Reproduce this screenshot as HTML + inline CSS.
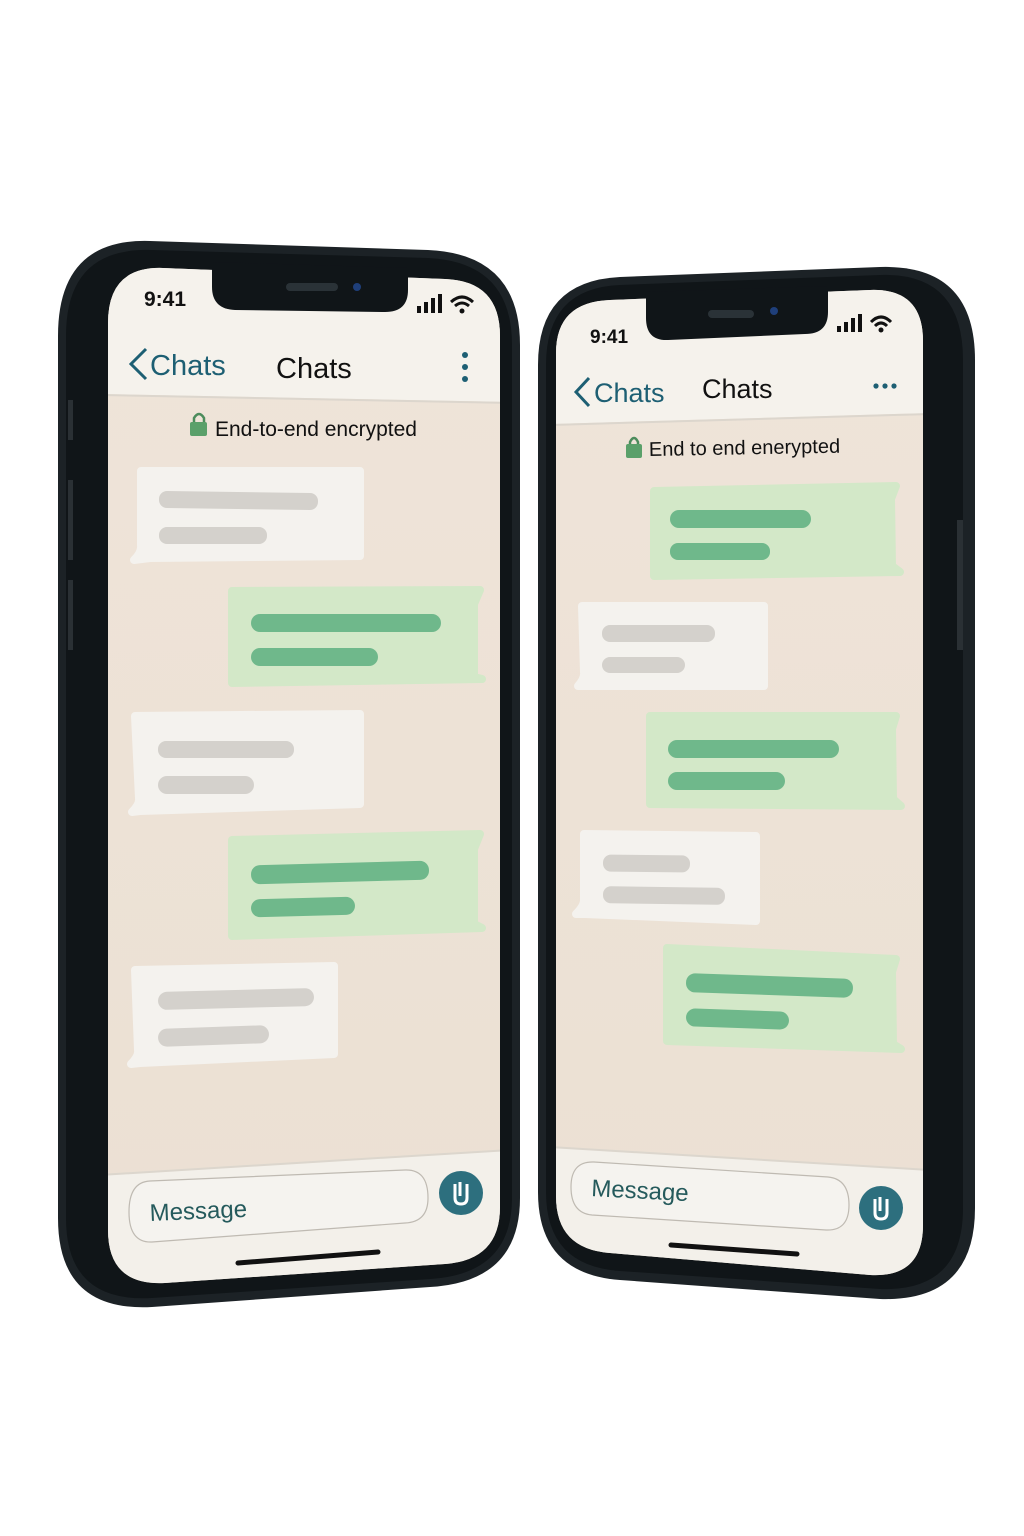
<!DOCTYPE html>
<html><head><meta charset="utf-8"><style>
html,body{margin:0;padding:0;background:#fff;width:1024px;height:1536px;overflow:hidden}
svg{display:block}
text{font-family:"Liberation Sans",sans-serif}
</style></head><body>
<svg width="1024" height="1536" viewBox="0 0 1024 1536" xmlns="http://www.w3.org/2000/svg">
<defs>
<linearGradient id="chatL" x1="0" y1="0" x2="0" y2="1"><stop offset="0" stop-color="#efe4d9"/><stop offset="1" stop-color="#ebe0d3"/></linearGradient>
<clipPath id="scrL"><path d="M163,268 L445,279 Q500,281 500,336 L500,1207 Q500,1260 445,1264 L165,1283 Q108,1286 108,1230 L108,323 Q108,266 163,268 Z"/></clipPath>
<clipPath id="scrR"><path d="M610,300 L870,290 Q923,288 923,341 L923,1225 Q923,1278 870,1275 L610,1253 Q556,1249 556,1196 L556,353 Q556,302 610,300 Z"/></clipPath>
</defs>

<!-- LEFT PHONE -->
<path d="M150,241 L428,250 Q520,254 520,345 L520,1198 Q520,1282 430,1287 L152,1307 Q58,1312 58,1218 L58,336 Q58,238 150,241 Z" fill="#1c2226"/>
<path d="M152,250 L428,258 Q512,262 512,345 L512,1198 Q512,1274 430,1279 L152,1298 Q66,1303 66,1218 L66,336 Q66,247 152,250 Z" fill="#101518"/>
<rect x="68" y="400" width="5" height="40" fill="#2a3034"/><rect x="68" y="480" width="5" height="80" fill="#2a3034"/><rect x="68" y="580" width="5" height="70" fill="#2a3034"/>
<g clip-path="url(#scrL)">
<rect x="100" y="260" width="410" height="1030" fill="url(#chatL)"/>
<polygon points="100,260 510,260 510,402 100,394" fill="#f5f2ec"/>
<polygon points="100,394 510,402 510,404 100,396" fill="#dcd6cd"/>
<polygon points="100,1175 510,1150 510,1290 100,1290" fill="#f3f0ea"/>
<polygon points="100,1174 510,1149 510,1151 100,1176" fill="#dcd6cd"/>
<text x="144" y="306" font-size="21" font-weight="bold" fill="#111">9:41</text>
<rect x="417" y="306" width="4" height="7" fill="#111"/><rect x="424" y="302" width="4" height="11" fill="#111"/><rect x="431" y="298" width="4" height="15" fill="#111"/><rect x="438" y="294" width="4" height="19" fill="#111"/>
<path d="M451,302 Q462,292 473,302 M455,306 Q462,300 469,306" stroke="#111" stroke-width="3" fill="none"/><circle cx="462" cy="311" r="2.5" fill="#111"/>
<path d="M146,349 L131,364 L146,379" stroke="#1d5f73" stroke-width="3" fill="none"/>
<text x="150" y="375" font-size="29" fill="#1d5f73">Chats</text>
<text x="276" y="378" font-size="29" fill="#111">Chats</text>
<circle cx="465" cy="355" r="3" fill="#1d5f73"/><circle cx="465" cy="367" r="3" fill="#1d5f73"/><circle cx="465" cy="379" r="3" fill="#1d5f73"/>
<path d="M194,423 L194,418 Q199,410 204,418 L204,423" stroke="#4c8c5c" stroke-width="2.5" fill="none"/>
<rect x="190" y="422" width="17" height="14" rx="2" fill="#5aa06a"/>
<text x="215" y="436" font-size="21" fill="#111">End-to-end encrypted</text>
<g stroke-linejoin="round" stroke-width="8">
<path d="M141,471 L360,471 L360,556 L150,558 L134,560 Q142,552 141,545 Z" fill="#f4f2ee" stroke="#f4f2ee"/>
<path d="M232,591 L480,590 L474,604 L474,677 L482,679 L232,683 Z" fill="#d3e8c8" stroke="#d3e8c8"/>
<path d="M135,716 L360,714 L360,804 L140,811 L132,812 Q140,804 139,798 Z" fill="#f4f2ee" stroke="#f4f2ee"/>
<path d="M232,840 L480,834 L474,849 L474,924 L482,928 L232,936 Z" fill="#d3e8c8" stroke="#d3e8c8"/>
<path d="M135,970 L334,966 L334,1054 L140,1063 L131,1064 Q139,1056 138,1050 Z" fill="#f4f2ee" stroke="#f4f2ee"/>
</g>
<g fill="#d4d1cc">
<rect x="159" y="492" width="159" height="17" rx="8" transform="rotate(0.8 238 500)"/>
<rect x="159" y="527" width="108" height="17" rx="8"/>
<rect x="158" y="741" width="136" height="17" rx="8"/>
<rect x="158" y="776" width="96" height="18" rx="9"/>
<rect x="158" y="990" width="156" height="18" rx="9" transform="rotate(-1.5 236 999)"/>
<rect x="158" y="1027" width="111" height="18" rx="9" transform="rotate(-2 213 1036)"/>
</g>
<g fill="#6fb88b">
<rect x="251" y="614" width="190" height="18" rx="9"/>
<rect x="251" y="648" width="127" height="18" rx="9"/>
<rect x="251" y="863" width="178" height="19" rx="9" transform="rotate(-1.5 340 872)"/>
<rect x="251" y="898" width="104" height="18" rx="9" transform="rotate(-1.5 303 907)"/>
</g>
<path d="M150,1181 L405,1170 Q428,1169 428,1198 Q428,1222 405,1223 L152,1242 Q129,1243 129,1212 Q129,1182 150,1181 Z" fill="#f5f3ef" stroke="#bfbab2" stroke-width="1.2"/>
<text x="150" y="1221" font-size="24" fill="#255a5c" transform="rotate(-2.5 150 1221)">Message</text>
<circle cx="461" cy="1193" r="22" fill="#2d6f7e"/>
<path d="M455,1184 L455,1198 Q455,1204 461,1204 Q467,1204 467,1198 L467,1184" stroke="#fff" stroke-width="3" fill="none"/>
<path d="M460,1182 L460,1196" stroke="#fff" stroke-width="3"/>
<path d="M238,1263 L378,1252" stroke="#111" stroke-width="5" stroke-linecap="round"/>
</g>
<path d="M212,262 L408,268 L408,290 Q408,312 385,312 L235,310 Q212,309 212,287 Z" fill="#101518"/>
<rect x="286" y="283" width="52" height="8" rx="4" fill="#2a3237"/>
<circle cx="357" cy="287" r="4" fill="#1f3f7a"/>

<!-- RIGHT PHONE -->
<path d="M620,277 L880,267 Q975,264 975,360 L975,1208 Q975,1302 880,1299 L620,1280 Q538,1274 538,1192 L538,365 Q538,281 620,277 Z" fill="#1c2226"/>
<path d="M620,285 L880,275 Q963,272 963,360 L963,1208 Q963,1292 880,1289 L620,1271 Q546,1266 546,1192 L546,365 Q546,288 620,285 Z" fill="#101518"/>
<rect x="957" y="520" width="6" height="130" fill="#2a3034"/>
<g clip-path="url(#scrR)">
<rect x="550" y="280" width="380" height="1010" fill="url(#chatL)"/>
<polygon points="550,280 930,280 930,413 550,424" fill="#f5f2ec"/>
<polygon points="550,424 930,413 930,415 550,426" fill="#dcd6cd"/>
<polygon points="550,1147 930,1170 930,1290 550,1290" fill="#f3f0ea"/>
<polygon points="550,1146 930,1169 930,1171 550,1148" fill="#dcd6cd"/>
<text x="590" y="343" font-size="19" font-weight="bold" fill="#111">9:41</text>
<rect x="837" y="326" width="4" height="6" fill="#111"/><rect x="844" y="322" width="4" height="10" fill="#111"/><rect x="851" y="318" width="4" height="14" fill="#111"/><rect x="858" y="314" width="4" height="18" fill="#111"/>
<path d="M871,322 Q881,312 891,322 M875,326 Q881,320 887,326" stroke="#111" stroke-width="3" fill="none"/><circle cx="881" cy="330" r="2.5" fill="#111"/>
<path d="M589,378 L576,392 L589,406" stroke="#1d5f73" stroke-width="3" fill="none"/>
<text x="594" y="402" font-size="27" fill="#1d5f73">Chats</text>
<text x="702" y="398" font-size="27" fill="#111">Chats</text>
<circle cx="876" cy="386" r="2.6" fill="#1d5f73"/><circle cx="885" cy="386" r="2.6" fill="#1d5f73"/><circle cx="894" cy="386" r="2.6" fill="#1d5f73"/>
<path d="M630,445 L630,442 Q634,434 638,442 L638,445" stroke="#4c8c5c" stroke-width="2.5" fill="none"/>
<rect x="626" y="444" width="16" height="14" rx="2" fill="#5aa06a"/>
<text x="649" y="456" font-size="20" fill="#111" transform="rotate(-1 649 456)">End to end enerypted</text>
<g stroke-linejoin="round" stroke-width="8">
<path d="M654,491 L896,486 L891,499 L892,566 L900,572 L654,576 Z" fill="#d3e8c8" stroke="#d3e8c8"/>
<path d="M582,606 L764,606 L764,686 L585,686 L578,686 Q585,678 584,672 Z" fill="#f4f2ee" stroke="#f4f2ee"/>
<path d="M650,716 L896,716 L892,729 L893,799 L901,806 L650,804 Z" fill="#d3e8c8" stroke="#d3e8c8"/>
<path d="M584,834 L756,836 L756,921 L585,914 L576,914 Q584,906 584,900 Z" fill="#f4f2ee" stroke="#f4f2ee"/>
<path d="M667,948 L896,959 L892,972 L893,1044 L901,1049 L667,1041 Z" fill="#d3e8c8" stroke="#d3e8c8"/>
</g>
<g fill="#d4d1cc">
<rect x="602" y="625" width="113" height="17" rx="8"/>
<rect x="602" y="657" width="83" height="16" rx="8"/>
<rect x="603" y="855" width="87" height="17" rx="8" transform="rotate(0.6 646 863)"/>
<rect x="603" y="887" width="122" height="17" rx="8" transform="rotate(0.8 664 895)"/>
</g>
<g fill="#6fb88b">
<rect x="670" y="510" width="141" height="18" rx="9"/>
<rect x="670" y="543" width="100" height="17" rx="8"/>
<rect x="668" y="740" width="171" height="18" rx="9"/>
<rect x="668" y="772" width="117" height="18" rx="9"/>
<rect x="686" y="976" width="167" height="19" rx="9" transform="rotate(2 770 985)"/>
<rect x="686" y="1010" width="103" height="18" rx="9" transform="rotate(2 737 1019)"/>
</g>
<path d="M594,1162 L828,1177 Q849,1179 849,1205 Q849,1231 826,1230 L592,1215 Q571,1213 571,1187 Q571,1161 594,1162 Z" fill="#f5f3ef" stroke="#bfbab2" stroke-width="1.2"/>
<text x="591" y="1196" font-size="24" fill="#255a5c" transform="rotate(3 591 1196)">Message</text>
<circle cx="881" cy="1208" r="22" fill="#2d6f7e"/>
<path d="M875,1199 L875,1213 Q875,1219 881,1219 Q887,1219 887,1213 L887,1199" stroke="#fff" stroke-width="3" fill="none"/>
<path d="M880,1197 L880,1211" stroke="#fff" stroke-width="3"/>
<path d="M671,1245 L797,1254" stroke="#111" stroke-width="5" stroke-linecap="round"/>
</g>
<path d="M646,292 L828,286 L828,312 Q828,334 805,334 L668,340 Q646,341 646,318 Z" fill="#101518"/>
<rect x="708" y="310" width="46" height="8" rx="4" fill="#2a3237"/>
<circle cx="774" cy="311" r="4" fill="#1f3f7a"/>
</svg>
</body></html>
